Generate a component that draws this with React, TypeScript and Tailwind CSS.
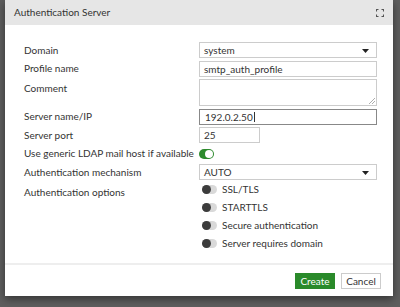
import { useState } from 'react';

function Toggle({ on }: { on: boolean }) {
  if (on) {
    return (
      <span className="inline-flex h-[10px] w-[15px] items-center justify-end rounded-full bg-[#2d8a2d] px-[1px]">
        <span className="h-[8px] w-[8px] rounded-full bg-white" />
      </span>
    );
  }
  return (
    <span className="inline-flex h-[9px] w-[15px] items-center justify-start rounded-full bg-[#d9d9d9]">
      <span className="h-[9px] w-[9px] rounded-full bg-[#3c3c3c]" />
    </span>
  );
}

function Arrow() {
  return (
    <svg width="7" height="4" viewBox="0 0 7 4" className="absolute right-[7px] top-[6px]">
      <path d="M0 0H7L3.5 4Z" fill="#222" />
    </svg>
  );
}

function Row({ label, children, top = false }: { label: string; children: React.ReactNode; top?: boolean }) {
  return (
    <div className={`flex ${top ? 'items-start' : 'items-center'}`}>
      <div className={`w-[175px] shrink-0 ${top ? 'pt-[2px]' : ''}`}>{label}</div>
      <div className="flex-1">{children}</div>
    </div>
  );
}

export default function App() {
  const [ip] = useState('192.0.2.50');
  const options = ['SSL/TLS', 'STARTTLS', 'Secure authentication', 'Server requires domain'];

  return (
    <div className="relative h-[307px] w-[400px] overflow-hidden bg-[#5e5e5e] font-['Lato','Liberation_Sans',sans-serif] text-[10px] text-[#333]">
      <div className="ml-[5px] flex h-[296px] w-[388px] flex-col bg-white shadow-[0_3px_8px_rgba(0,0,0,0.45)]">
        {/* Header */}
        <div className="flex h-[25px] shrink-0 items-center justify-between bg-[#e6e6e6] pl-[9px] pr-[9px] text-[10px] text-[#333]">
          <span>Authentication Server</span>
          <svg width="8" height="8" viewBox="0 0 8 8" fill="none" stroke="#555" strokeWidth="1.1">
            <path d="M0.5 2.5V0.5H2.5M5.5 0.5H7.5V2.5M7.5 5.5V7.5H5.5M2.5 7.5H0.5V5.5" />
          </svg>
        </div>

        {/* Body */}
        <div className="flex flex-1 flex-col gap-[2.5px] pl-[19px] pr-[16px] pt-[17px]">
          <Row label="Domain">
            <div className="relative h-[16px] w-[178px] border border-[#ccc] px-[4px] leading-[14px]">
              system
              <Arrow />
            </div>
          </Row>
          <Row label="Profile name">
            <div className="h-[16px] w-[178px] border border-[#ccc] px-[4px] leading-[14px]">smtp_auth_profile</div>
          </Row>
          <Row label="Comment" top>
            <div className="relative h-[27px] w-[178px] border border-[#ccc]">
              <svg width="6" height="6" viewBox="0 0 6 6" className="absolute bottom-[1px] right-[1px]" stroke="#999" strokeWidth="0.8">
                <path d="M6 0L0 6M6 3L3 6" />
              </svg>
            </div>
          </Row>
          <Row label="Server name/IP">
            <div className="flex h-[16px] w-[178px] items-center border border-[#888] px-[5px] leading-[14px]">
              {ip}
              <span className="ml-[1px] h-[10px] w-px bg-[#333]" />
            </div>
          </Row>
          <Row label="Server port">
            <div className="h-[16px] w-[61px] border border-[#ccc] px-[4px] leading-[14px]">25</div>
          </Row>
          <Row label="Use generic LDAP mail host if available">
            <div className="flex h-[16px] items-center">
              <Toggle on />
            </div>
          </Row>
          <Row label="Authentication mechanism">
            <div className="relative h-[16px] w-[178px] border border-[#ccc] px-[4px] leading-[14px]">
              AUTO
              <Arrow />
            </div>
          </Row>
          <Row label="Authentication options" top>
            <div className="-mt-[2px] flex flex-col gap-[1px] pl-[3px]">
              {options.map((o) => (
                <div key={o} className="flex h-[17px] items-center gap-[5px]">
                  <Toggle on={false} />
                  <span>{o}</span>
                </div>
              ))}
            </div>
          </Row>
        </div>

        {/* Footer */}
        <div className="flex h-[33px] shrink-0 items-center justify-end gap-[6px] border-t-2 border-[#eee] pr-[12px]">
          <button className="h-[16px] w-[40px] bg-[#2a8a2a] text-[10px] leading-[14px] text-white">Create</button>
          <button className="h-[16px] w-[40px] border border-[#ccc] bg-white text-[10px] leading-[14px] text-[#333]">Cancel</button>
        </div>
      </div>
    </div>
  );
}
